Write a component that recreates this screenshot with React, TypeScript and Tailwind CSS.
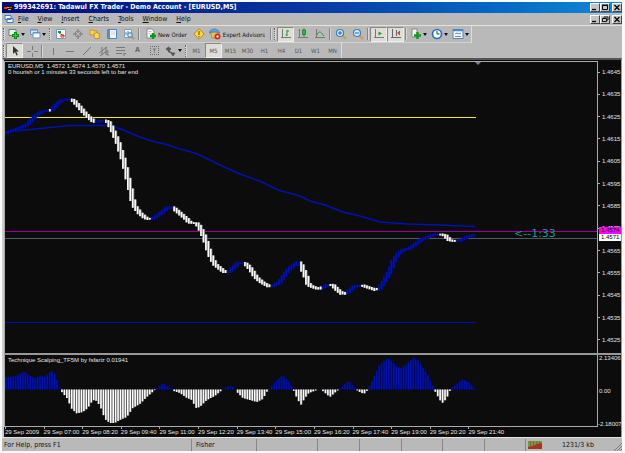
import { clsx } from "clsx";
import type { ReactNode } from "react";

type Point = [number, number];

const menus = ["File", "View", "Insert", "Charts", "Tools", "Window", "Help"];
const timeframes = ["M1", "M5", "M15", "M30", "H1", "H4", "D1", "W1", "MN"];
const prices = [
  "1.4645", "1.4635", "1.4625", "1.4615", "1.4605", "1.4595", "1.4585",
  "1.4575", "1.4565", "1.4555", "1.4545", "1.4535", "1.4525",
];
const times = [
  "29 Sep 2009", "29 Sep 07:00", "29 Sep 08:20", "29 Sep 09:40", "29 Sep 11:00",
  "29 Sep 12:20", "29 Sep 13:40", "29 Sep 15:00", "29 Sep 16:20", "29 Sep 17:40",
  "29 Sep 19:00", "29 Sep 20:20", "29 Sep 21:40",
];

// Smoothed price, as key points between which the bars are interpolated
const pricePath: Point[] = [
  [5, 133], [18, 128.5], [28, 124], [34, 117], [42, 111.5], [47, 110.5], [52, 110],
  [57, 104], [62, 100], [68, 99], [73, 99.5], [79, 106], [84, 112], [90, 118],
  [95, 122], [100, 121], [103, 120], [108, 121], [112, 128], [118, 142], [124, 161],
  [130, 187], [134, 205], [140, 213], [146, 218], [150, 219], [153, 218.5], [160, 214],
  [167, 208], [171, 206.5], [174, 208], [180, 213], [187, 219], [190, 222.5], [197, 223],
  [200, 227], [205, 238], [210, 254], [215, 264], [220, 268], [225, 272], [229, 272],
  [233, 268], [238, 263], [241, 262], [246, 263.5], [251, 269], [256, 277], [262, 282],
  [270, 286.5], [273, 286], [280, 282], [288, 270], [293, 266], [297, 262], [300, 262],
  [303, 269], [306, 276], [309, 285], [314, 287], [320, 289], [325, 286], [329, 284],
  [333, 285], [338, 290], [343, 294], [347, 293], [351, 289], [355, 286], [362, 285],
  [368, 287], [377, 290], [380, 288], [385, 280], [390, 271], [395, 258], [400, 252],
  [403, 250], [410, 248], [417, 243], [422, 239], [428, 237], [434, 234.5], [441, 234],
  [445, 235], [450, 240], [456, 241], [461, 240], [468, 236.5], [476, 234.5],
];

const fallingRanges: Point[] = [
  [48, 51], [70, 96], [104, 151], [173, 227], [244, 271],
  [300, 322], [329, 346], [360, 378], [440, 457],
];

const histogramPath: Point[] = [
  [5, 377.5], [12, 377], [20, 374], [25, 371.5], [30, 376], [35, 378], [40, 375.5],
  [45, 377], [50, 372], [52, 371], [55, 374], [58, 382], [60, 389], [62, 392], [67, 398],
  [72, 409], [77, 413.5], [83, 412], [88, 408], [93, 400], [97, 401], [101, 408],
  [105, 419], [110, 423], [115, 423], [120, 420], [127, 417], [133, 408], [140, 404],
  [147, 397], [155, 390], [156, 389], [163, 383], [168, 387], [173, 389], [174, 391],
  [180, 393], [187, 398], [192, 400], [196, 408], [200, 407], [207, 400], [215, 396],
  [221, 391], [224, 388], [230, 386], [234, 387], [237, 392], [243, 398], [250, 400],
  [257, 402], [263, 399], [268, 390], [270, 388], [277, 380], [283, 375.5], [288, 380],
  [293, 388], [294, 391], [297, 398], [301, 405], [305, 398], [309, 393], [317, 390],
  [320, 388.5], [323, 391], [330, 397], [337, 391], [340, 389], [347, 382], [350, 382],
  [356, 389], [358, 391], [364, 394], [368, 390], [370, 385], [374, 377], [379, 366],
  [385, 360], [388, 358], [392, 361], [397, 367], [402, 368], [407, 364], [410, 361],
  [414, 357.5], [418, 360], [423, 368], [428, 375], [433, 386], [436, 393], [440, 400],
  [443, 403], [447, 398], [450, 391], [453, 387], [458, 383], [463, 379], [470, 383],
  [475, 388.5],
];

const averagePath =
  "5,132 20,130.5 40,128.5 70,125.5 108,125.5 118,128 128,132 140,137 155,142 165,144 180,149 195,153 210,160 222,166 240,174 262,182 278,190 300,196 310,201 325,205 343,212 360,216 380,222 408,224 440,225 475,226.5";

const BAR = 2.44;
const ZERO = 389.5;
const bars = Array.from({ length: 193 }, (_, i) => 6 + i * BAR);

function valueAt(path: Point[], x: number) {
  if (x <= path[0][0]) return path[0][1];
  for (let i = 1; i < path.length; i++) {
    const [x1, y1] = path[i - 1];
    const [x2, y2] = path[i];
    if (x <= x2) return y1 + ((y2 - y1) * (x - x1)) / (x2 - x1);
  }
  return path[path.length - 1][1];
}

function Icon({ children }: { children: ReactNode }) {
  return (
    <svg viewBox="0 0 12 12" className="size-3 shrink-0" fill="none" aria-hidden="true">
      {children}
    </svg>
  );
}

function Grip() {
  return <span className="mx-px h-3 w-[2px] shrink-0 border-l border-dotted border-[#666] bg-[#d6d6d6]" />;
}

function Divider() {
  return <span className="mx-px h-3 w-[2px] shrink-0 border-l border-[#858585] bg-[#d8d8d8]" />;
}

function Tool({ label, pressed, menu, children }: { label: string; pressed?: boolean; menu?: boolean; children: ReactNode }) {
  return (
    <button
      type="button"
      aria-label={label}
      className={clsx(
        "flex h-[15px] shrink-0 items-center justify-center",
        menu ? "w-[21px]" : "w-[17px]",
        pressed && "border border-t-[#888] border-r-[#eee] border-b-[#eee] border-l-[#888] bg-[#deddd6]"
      )}
    >
      {children}
      {menu && (
        <svg viewBox="0 0 4 3" className="ml-px h-[3px] w-1 shrink-0" aria-hidden="true">
          <path d="M0 0h4L2 3z" fill="#111" />
        </svg>
      )}
    </button>
  );
}

function WindowButtons({ restore }: { restore?: boolean }) {
  const box =
    "flex h-[9px] w-[10px] items-center justify-center border border-t-white border-l-white border-r-[#444] border-b-[#444] bg-[#c4c4c4]";
  return (
    <div className="ml-auto flex items-center">
      <button type="button" aria-label="Minimize" className={box}>
        <svg viewBox="0 0 8 7" className="h-[7px] w-2"><path d="M1 5.500h4" stroke="#000" strokeWidth="1.300" /></svg>
      </button>
      <button type="button" aria-label={restore ? "Restore" : "Maximize"} className={box}>
        <svg viewBox="0 0 8 7" className="h-[7px] w-2" fill="none" stroke="#000">
          {restore ? <path d="M3 2V1h4v3H5.500M1.500 2.500h4v3h-4z" strokeWidth=".9" /> : <path d="M1.500 1.500h5v4h-5zM1 1h6" />}
        </svg>
      </button>
      <button type="button" aria-label="Close" className={clsx(box, "ml-[2px]")}>
        <svg viewBox="0 0 8 7" className="h-[7px] w-2"><path d="M1.500 1l5 5M6.500 1l-5 5" stroke="#000" strokeWidth="1.200" /></svg>
      </button>
    </div>
  );
}

function StandardToolbar() {
  return (
    <div className="flex h-[17px] w-max items-center border-r border-b border-r-[#ddd] border-b-[#d2d2d2]">
      <Grip />
      <Tool label="New chart" menu>
        <Icon>
          <path d="M1 1.500h7v6H1z" fill="#e9f4ea" stroke="#5d8a76" />
          <path d="M7.500 4v7M4 7.500h7" stroke="#0a8a1a" strokeWidth="3" />
          <path d="M7.500 5v5M5 7.500h5" stroke="#2fd040" />
        </Icon>
      </Tool>
      <Tool label="Profiles" menu>
        <Icon>
          <path d="M1.500 1.500h7v5h-7z" fill="#d4e4f6" stroke="#6a98c8" />
          <path d="M4 4.500h7v5.500H4z" fill="#f6faff" stroke="#6a98c8" />
          <path d="M1.500 2h7M4 5h7" stroke="#5a90cc" />
        </Icon>
      </Tool>
      <Grip />
      <Tool label="Market Watch">
        <Icon>
          <path d="M1.500 1.500h9v9h-9z" fill="#fff" stroke="#6f9fc8" />
          <path d="M3 3h3v2H3z" fill="#18a030" />
          <path d="M4 5l5 3M6 7h3v2H6z" stroke="#d03020" />
        </Icon>
      </Tool>
      <Tool label="Data Window">
        <Icon>
          <circle cx="6" cy="6" r="3" stroke="#888" />
          <path d="M6 1v4M6 7v4M1 6h4M7 6h4" stroke="#888" strokeWidth="1.500" />
        </Icon>
      </Tool>
      <Tool label="Navigator">
        <Icon>
          <path d="M1 2h3l1 1h3v4H1z" fill="#fbd25a" stroke="#c08a1c" strokeWidth=".8" />
          <path d="M5 5l1.500.2L8 4l1 1.500 2 .5-1 2 .5 2.500H6L5 8z" fill="#ffd84c" stroke="#b88420" strokeWidth=".8" />
        </Icon>
      </Tool>
      <Tool label="Terminal">
        <Icon>
          <path d="M1.500 1.500h9v9h-9z" fill="#f3f8fd" stroke="#4a86c0" />
          <path d="M3 2v8" stroke="#5a90cc" strokeWidth="2" />
          <path d="M5 4h4M5 6h4" stroke="#b6c4d2" strokeWidth=".7" />
        </Icon>
      </Tool>
      <Tool label="Strategy Tester">
        <Icon>
          <path d="M1.500 1.500h7v8h-7z" fill="#eff5fb" stroke="#76a0c8" />
          <path d="M3 7V4M5 6V3" stroke="#689" />
          <circle cx="7" cy="7" r="2.300" fill="#cbe3f6" stroke="#3e78ac" />
          <path d="M8.800 8.800L11 11" stroke="#c49024" strokeWidth="1.600" />
        </Icon>
      </Tool>
      <Divider />
      <button type="button" className="flex h-[15px] items-center gap-px pl-1">
        <Icon>
          <path d="M2 1h5l2 2v7H2z" fill="#fff" stroke="#777" strokeWidth=".8" />
          <path d="M3.500 3.500h3M3.500 5.500h2" stroke="#999" strokeWidth=".7" />
          <path d="M8 5v6M5 8h6" stroke="#0a9a1a" strokeWidth="2.400" />
        </Icon>
        New Order
      </button>
      <span className="w-1" />
      <Tool label="Alerts">
        <Icon>
          <path d="M6 .8L11.200 6 6 11.200.8 6z" fill="#ffd640" stroke="#b98a12" />
          <path d="M6 3v4M6 8v1.300" stroke="#8a5c00" strokeWidth="1.200" />
        </Icon>
      </Tool>
      <button type="button" className="flex h-[15px] items-center gap-[2px] pr-1 pl-px">
        <Icon>
          <path d="M1.500 4h8L8 10H3z" fill="#eec24c" stroke="#a87e1e" strokeWidth=".7" />
          <path d="M0 5c1-3 3-4 5.500-4S10 2.500 11 5C8 3.500 3 3.500 0 5z" fill="#5aa7dd" stroke="#2e76ae" strokeWidth=".6" />
          <circle cx="8.500" cy="8.500" r="3" fill="#d8281c" />
          <path d="M7.500 7.500h2v2h-2z" fill="#fff" />
        </Icon>
        Expert Advisors
      </button>
      <Divider />
      <Grip />
      <Tool label="Bar chart" pressed>
        <Icon>
          <path d="M2.500 1v9M1 9.500h10" stroke="#777" />
          <path d="M7 2v6M5.500 7H7M7 3h2" stroke="#16962a" />
        </Icon>
      </Tool>
      <Tool label="Candlesticks">
        <Icon>
          <path d="M2.500 1v9M1 9.500h10" stroke="#777" />
          <path d="M7 .5v8" stroke="#0a7a1a" />
          <path d="M5.500 2h3v4.500h-3z" fill="#1fc430" stroke="#0a7a1a" strokeWidth=".7" />
        </Icon>
      </Tool>
      <Tool label="Line chart">
        <Icon>
          <path d="M2.500 1v9M1 9.500h10" stroke="#777" />
          <path d="M3 7c1-4 4-4 6 0l1 1" stroke="#3f8f4c" />
        </Icon>
      </Tool>
      <Divider />
      {["Zoom in", "Zoom out"].map((label) => (
        <Tool key={label} label={label}>
          <Icon>
            <path d="M7.500 7.500l3.200 3.200" stroke="#d2a12a" strokeWidth="2" />
            <circle cx="5" cy="5" r="3.500" fill="#d5ebfb" stroke="#3a7fc4" strokeWidth="1.200" />
            <path d={label === "Zoom in" ? "M3 5h4M5 3v4" : "M3 5h4"} stroke="#2465a8" />
          </Icon>
        </Tool>
      ))}
      <Divider />
      <Tool label="Auto scroll" pressed>
        <Icon>
          <path d="M2.500 1v9M1 9.500h10" stroke="#777" />
          <path d="M5.500 3.500l3.500 2-3.500 2z" fill="#1aa02c" />
        </Icon>
      </Tool>
      <Tool label="Chart shift" pressed>
        <Icon>
          <path d="M2.500 1v9M1 9.500h10M6.500 2v6" stroke="#667" />
          <path d="M7 5l3-2.500v5z" fill="#d24a1c" />
        </Icon>
      </Tool>
      <Divider />
      <Tool label="Indicators" menu>
        <Icon>
          <path d="M2 1h5v8H2z" fill="#f5f5f0" stroke="#777" strokeWidth=".8" />
          <path d="M7.500 4v7M4 7.500h7" stroke="#0c9a1c" strokeWidth="2.400" />
        </Icon>
      </Tool>
      <Tool label="Periods" menu>
        <Icon>
          <circle cx="6" cy="6" r="4.500" fill="#f4faff" stroke="#2b6fc0" strokeWidth="1.700" />
          <path d="M6 3v3h2.500" stroke="#345" />
        </Icon>
      </Tool>
      <Tool label="Templates" menu>
        <Icon>
          <path d="M1 1.500h10v9H1z" fill="#f5faff" stroke="#4a86c4" />
          <path d="M1 2.500h10" stroke="#4a86c4" strokeWidth="1.500" />
          <path d="M3 6l2-1 2 1 2-1M3 8.500h6" stroke="#567" strokeWidth=".8" />
        </Icon>
      </Tool>
    </div>
  );
}

const lineTools: [string, string][] = [
  ["Vertical line", "M6.500 3v7"],
  ["Horizontal line", "M2 6.500h8"],
  ["Trendline", "M2 10l8-8"],
  ["Channel", "M1 8l8-6M2 11l8-6M4 2v8M8 2v8M9 7h2M9 10h2M9 7v3"],
  ["Fibonacci", "M1 2.500h9M1 5.500h9M1 8.500h6M9 8v3M9 8.500h2"],
];

function LineToolbar() {
  return (
    <div className="flex h-[15px] w-max items-center border-r border-[#ddd]">
      <Grip />
      <Tool label="Cursor" pressed>
        <Icon><path d="M4 1v8l2-2 1.500 3.500 1.300-.6L7.300 6.500H10z" fill="#333" /></Icon>
      </Tool>
      <Tool label="Crosshair">
        <Icon><path d="M6.500 1v4M6.500 8v4M1 6.500h4M8 6.500h4" stroke="#777" /></Icon>
      </Tool>
      <Divider />
      {lineTools.map(([label, d]) => (
        <Tool key={label} label={label}>
          <Icon><path d={d} stroke="#777" /></Icon>
        </Tool>
      ))}
      <Tool label="Text"><span className="text-[7px] font-bold text-[#666]">A</span></Tool>
      <Tool label="Text label">
        <span className="border border-dotted border-[#666] px-[2px] text-[6px] leading-[7px] text-[#444]">T</span>
      </Tool>
      <Tool label="Arrows" menu>
        <Icon><path d="M1 4l2.500-2L6 4 3.500 6zM6 8h4L8 11zM3.500 5v2l4 1" fill="#555" stroke="#555" strokeWidth=".8" /></Icon>
      </Tool>
      <Grip />
      {timeframes.map((tf) => (
        <Tool key={tf} label={tf} pressed={tf === "M5"}>
          <span className="text-[6px] text-[#555]">{tf}</span>
        </Tool>
      ))}
    </div>
  );
}

function PriceChart() {
  return (
    <svg viewBox="5 62 592 291" className="block w-full" role="img" aria-label="EURUSD, M5 price chart">
      <path d="M5 117.500h471" stroke="#f4f000" />
      <path d="M5 322.500h471" stroke="#0010a8" />
      <path d="M5 231.500h592" stroke="#980098" />
      <path d="M5 238.500h592" stroke="#505a68" />
      <path d="M475 62h6l-3 3z" fill="#77808c" />
      <polyline points={averagePath} fill="none" stroke="#0012b0" strokeWidth="1.400" />
      {bars.map((x) => {
        const a = valueAt(pricePath, x - BAR);
        const b = valueAt(pricePath, x + BAR);
        const falling = fallingRanges.some(([from, to]) => x >= from && x <= to);
        const top = Math.min(a, b) - 0.5;
        const height = Math.abs(a - b) + 1.5;
        return (
          <g key={x}>
            <rect x={x - 1} y={top} width="2.440" height={height} fill={falling ? "#777" : "#000870"} />
            <rect x={x - 1} y={top} width="1.600" height={height} fill={falling ? "#fff" : "#0012b0"} />
          </g>
        );
      })}
      <text x="514" y="237" fontSize="11" fill="#219494" fontFamily="'DejaVu Sans', sans-serif">{"<--1:33"}</text>
    </svg>
  );
}

function IndicatorChart() {
  return (
    <svg viewBox="5 355 592 71" className="block w-full" role="img" aria-label="Technique Scalping histogram">
      {bars.map((x) => {
        const y = valueAt(histogramPath, x);
        const up = y < ZERO;
        const top = Math.min(y, ZERO);
        const height = Math.abs(y - ZERO);
        return (
          <g key={x}>
            <rect x={x - 1} y={top} width="2.440" height={height} fill={up ? "#000660" : "#444"} />
            <rect x={x - 1} y={top} width="1.600" height={height} fill={up ? "#0012a4" : "#fff"} />
          </g>
        );
      })}
    </svg>
  );
}

function Chart() {
  return (
    <main className="border-t-2 border-r border-l-2 border-t-[#555] border-r-[#999] border-l-[#ccc] bg-[#0c0c0c] pt-px font-['Liberation_Sans',sans-serif] text-[6px] leading-[6px] text-[#e4e4e4]">
      <div className="flex">
        <div className="relative min-w-0 flex-1 border-t border-r border-l border-[#aaa]">
          <PriceChart />
          <p className="absolute top-px left-[3px] whitespace-pre">
            {"EURUSD,M5  1.4572 1.4574 1.4570 1.4571\n0 hourish or 1 minutes 33 seconds left to bar end"}
          </p>
        </div>
        <div className="relative flex w-[23px] flex-col justify-between pt-2 pb-[10px]">
          {prices.map((price) => (
            <span key={price} className="flex items-center gap-[2px]">
              <i className="h-px w-[2px] bg-[#aaa]" />
              {price}
            </span>
          ))}
          <div className="absolute top-[57%] left-px text-black">
            <span className="block bg-[#f0f] px-[2px] leading-[7px]">1.4574</span>
            <span className="block bg-white px-[2px] leading-[7px]">1.4571</span>
          </div>
        </div>
      </div>
      <div className="flex border-t-2 border-[#999]">
        <div className="relative min-w-0 flex-1 border-r border-b border-l border-[#aaa]">
          <IndicatorChart />
          <p className="absolute top-[2px] left-[3px]">Technique Scalping_TF5M by fsfariz 0.01941</p>
        </div>
        <div className="flex w-[23px] flex-col justify-between">
          <span className="pl-px">2.13406</span>
          <span className="pl-px">0.00</span>
          <span>-2.18007</span>
        </div>
      </div>
      <div className="grid grid-cols-13 pr-[114px] pb-[2px] pl-px">
        {times.map((time) => (
          <span key={time} className="whitespace-nowrap">
            <i className="block h-[2px] w-px bg-[#aaa]" />
            {time}
          </span>
        ))}
      </div>
    </main>
  );
}

function StatusBar() {
  const cell = "h-3 border-l border-[#888] pl-1";
  return (
    <footer className="flex h-[14px] items-center border-t border-[#e4e4e4] text-[7px] leading-3">
      <span className="flex-1 pl-[2px]">For Help, press F1</span>
      <span className={clsx(cell, "w-[65px]")}>Fisher</span>
      <span className={clsx(cell, "w-[61px]")} />
      <span className={clsx(cell, "w-[42px]")} />
      <span className={clsx(cell, "w-[42px]")} />
      <span className={clsx(cell, "w-[41px]")} />
      <span className={clsx(cell, "w-[42px]")} />
      <span className={clsx(cell, "w-[41px]")} />
      <span className="flex h-3 w-[97px] items-center border-l border-[#888] pl-[2px]">
        <svg viewBox="0 0 14 8" className="h-2 w-[14px]" aria-hidden="true">
          <path d="M0 0h14v3L0 7z" fill="#7d963c" />
          <path d="M0 8V6l5-1 4-2 5-1v6z" fill="#b82a20" />
          <path d="M2.500 0v8M5.500 0v8M8.500 0v8M11.500 0v8" stroke="#6a5636" strokeWidth=".6" />
        </svg>
        <span className="flex-1 text-center">1231/3 kb</span>
        <svg viewBox="0 0 8 8" className="size-2 self-end" aria-hidden="true">
          <path d="M0 8l8-8M3 8l5-5M6 8l2-2" stroke="#777" strokeWidth=".9" />
        </svg>
      </span>
    </footer>
  );
}

export default function App() {
  return (
    <div className="bg-[#fbfbfb] py-[2px] pr-[3px] pl-[2px] font-['DejaVu_Sans_Condensed','Liberation_Sans',sans-serif] text-[6px] text-[#111]">
      <div className="bg-[#b9b9b9]">
        <header className="flex h-[11px] items-center gap-px bg-linear-to-r from-[#00087c] via-[#0838a4] to-[#1288d8] pl-px text-white">
          <svg viewBox="0 0 10 10" className="size-[10px]" aria-hidden="true">
            <path d="M0 3h10v4H0z" fill="#15120e" />
            <path d="M1 4h3v2H1zM6 4h3v1H6z" fill="#d83a28" />
            <path d="M4 4h2v1H4zM5 6h3v1H5z" fill="#e0b050" />
          </svg>
          <h1 className="text-[7px] leading-[11px] font-bold whitespace-nowrap">
            999342691: Tadawul FX Trader - Demo Account - [EURUSD,M5]
          </h1>
          <WindowButtons />
        </header>
        <nav className="flex h-[13px] items-center gap-[9px] border-b border-[#e6e3cf] pl-[2px] text-[7px]">
          <svg viewBox="0 0 10 10" className="-mr-[5px] size-[10px]" fill="#eff6ff" stroke="#3c7cc0" aria-hidden="true">
            <path d="M1 1.500h6v4H1zM3 4.500h6v4H3z" />
          </svg>
          {menus.map((menu) => (
            <button key={menu} type="button">
              <span className="underline">{menu[0]}</span>
              {menu.slice(1)}
            </button>
          ))}
          <WindowButtons restore />
        </nav>
        <StandardToolbar />
        <LineToolbar />
        <Chart />
        <StatusBar />
      </div>
    </div>
  );
}
